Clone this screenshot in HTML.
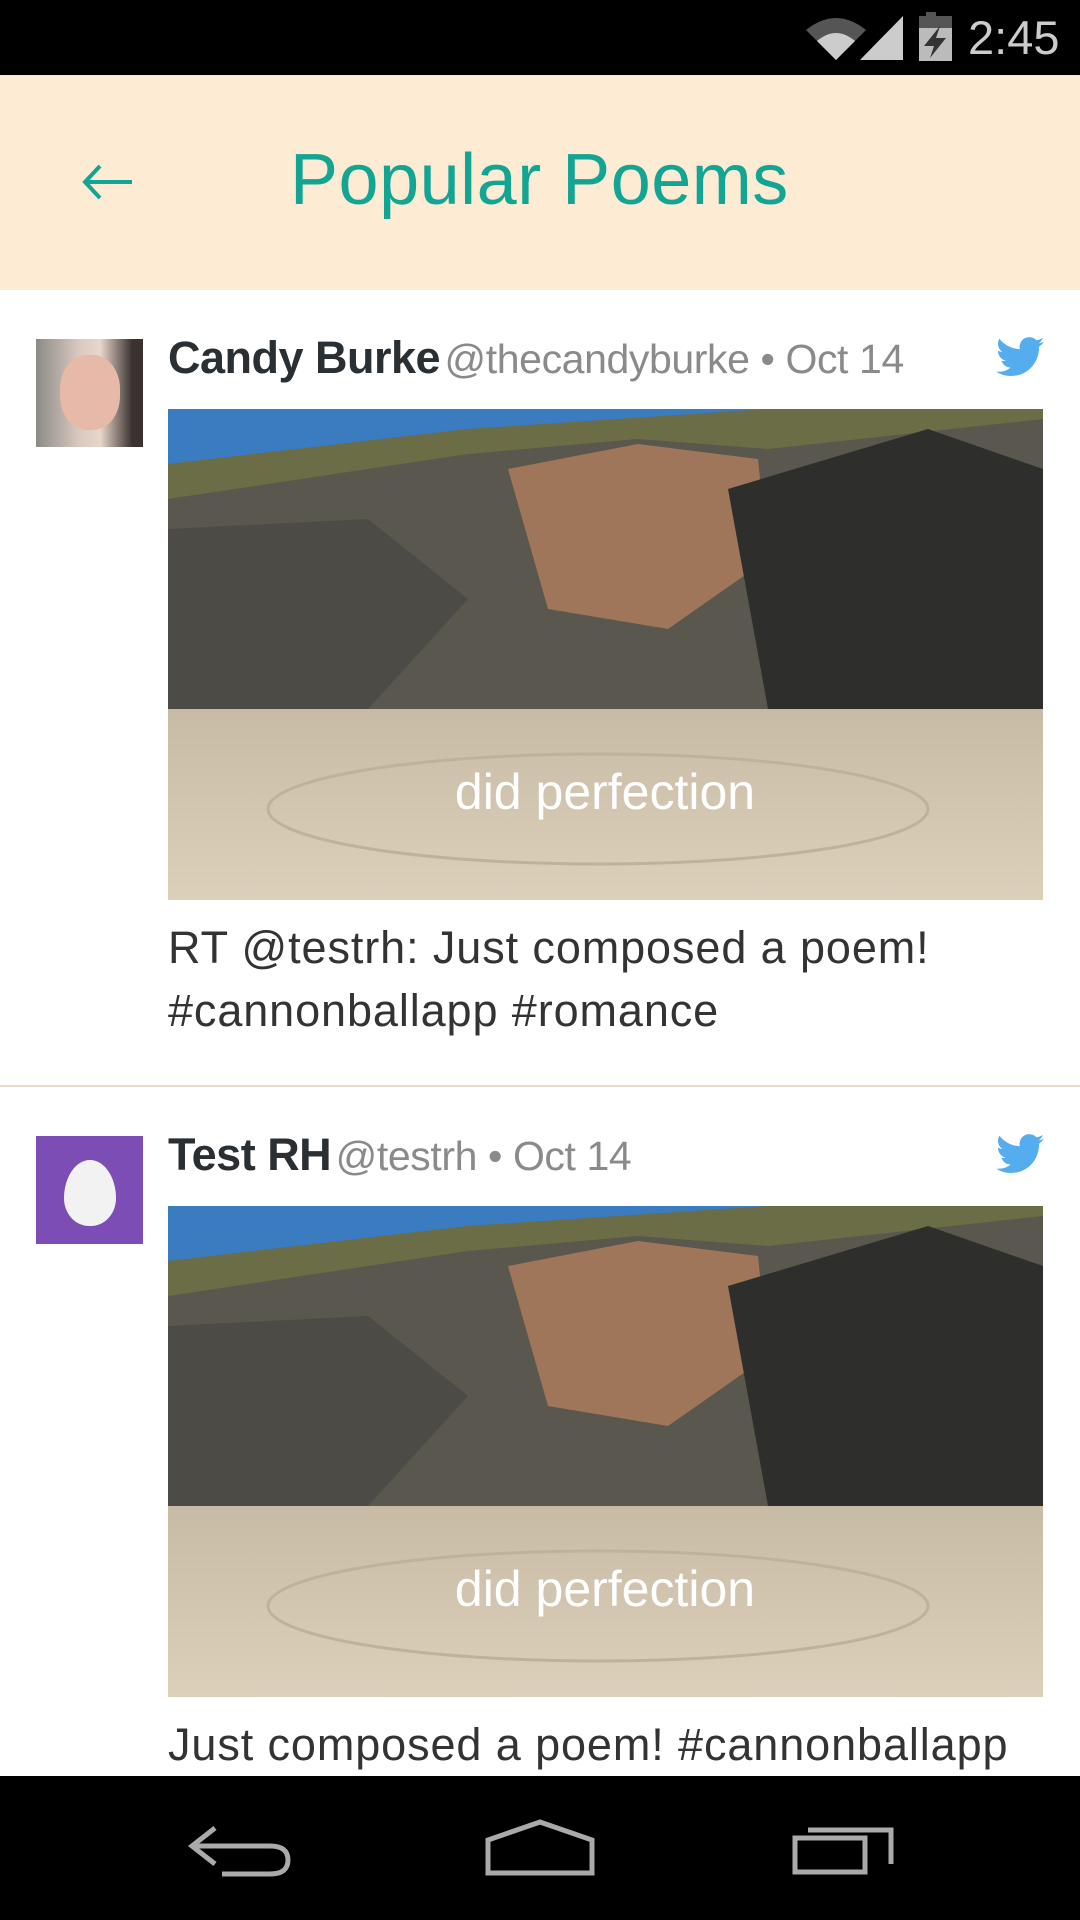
<!DOCTYPE html>
<html><head><meta charset="utf-8"><style>
*{margin:0;padding:0;box-sizing:border-box}
body{width:1080px;height:1920px;position:relative;overflow:hidden;background:#fff;font-family:"Liberation Sans",sans-serif}
.abs{position:absolute}
.name{font-weight:bold;color:#292f33;font-size:45px;letter-spacing:-0.5px}
.handle{font-size:41px;color:#8a8a8a;letter-spacing:-0.4px}
.txt{font-size:45px;color:#333;line-height:63px;letter-spacing:0.9px}
</style></head><body>
<div class="abs" style="left:0;top:0;width:1080px;height:75px;background:#000"></div>
<svg class="abs" style="left:800px;top:8px" width="160" height="60" viewBox="0 0 160 60">
<path d="M6 22 Q36 -2 66 22 L36 52 Z" fill="#555"/>
<path d="M17 33 Q36 17 55 33 L36 52 Z" fill="#ccc"/>
<path d="M60 52 L103 8 L103 52 Z" fill="#ccc"/>
<rect x="126" y="4" width="10" height="6" fill="#555"/>
<rect x="119" y="8" width="33" height="45" fill="#bbb"/>
<rect x="119" y="8" width="33" height="12" fill="#555"/>
<path d="M140 18 L124 38 L134 38 L130 50 L146 30 L136 30 Z" fill="#333"/>
</svg>
<div class="abs" style="left:968px;top:10px;font-size:47px;color:#ccc">2:45</div>
<div class="abs" style="left:0;top:75px;width:1080px;height:215px;background:#fdecd3"></div>
<svg class="abs" style="left:82px;top:162px" width="52" height="40" viewBox="0 0 52 40"><path d="M2 20 H50 M18 4 L3 20 L18 36" stroke="#12a594" stroke-width="4" fill="none"/></svg>
<div class="abs" style="left:290px;top:139px;font-size:72px;color:#12a594;letter-spacing:0.5px">Popular Poems</div>

<!-- tweet 1 -->
<div class="abs" style="left:36px;top:339px;width:107px;height:108px;background:linear-gradient(90deg,#8c8a86,#d9c9c0 40%,#e8d6cc 60%,#3a3230 90%)"></div>
<div class="abs" style="left:60px;top:355px;width:60px;height:75px;border-radius:45%;background:#e6b9a8"></div>
<div class="abs" style="left:168px;top:332px;white-space:nowrap"><span class="name">Candy Burke</span> <span class="handle">@thecandyburke • Oct 14</span></div>
<svg class="abs" style="left:996px;top:337px" width="48" height="40" viewBox="0 0 24 20"><path d="M24 2.4a10 10 0 0 1-2.8.8 4.9 4.9 0 0 0 2.2-2.7 9.8 9.8 0 0 1-3.1 1.2A4.9 4.9 0 0 0 11.900 6.1 14 14 0 0 1 1.7.9a4.9 4.9 0 0 0 1.5 6.6 4.9 4.9 0 0 1-2.2-.6 4.9 4.9 0 0 0 3.9 4.9 4.9 4.9 0 0 1-2.2.1 4.9 4.9 0 0 0 4.6 3.4A9.9 9.9 0 0 1 0 17.3 14 14 0 0 0 7.5 19.5c9.1 0 14-7.5 14-14v-.6A10 10 0 0 0 24 2.4z" fill="#55acee"/></svg>
<svg class="abs" style="left:168px;top:409px" width="875" height="491" viewBox="0 0 875 491">
<defs><linearGradient id="s" x1="0" y1="0" x2="0" y2="1"><stop offset="0" stop-color="#c8bba5"/><stop offset="1" stop-color="#ddd0bb"/></linearGradient></defs>
<rect width="875" height="491" fill="#3a4a6a"/>
<rect width="875" height="60" fill="#3b7bc0"/>
<path d="M0 55 L300 20 L600 0 L875 0 L875 60 L0 100 Z" fill="#6a6d45"/>
<path d="M0 90 L300 45 L470 30 L600 40 L875 10 L875 310 L0 310 Z" fill="#5a574e"/>
<path d="M340 60 L470 35 L590 50 L600 150 L500 220 L380 200 Z" fill="#a0765a"/>
<path d="M560 80 L760 20 L875 60 L875 300 L600 300 Z" fill="#2e2f2c"/>
<path d="M0 120 L200 110 L300 190 L200 300 L0 300 Z" fill="#4c4b45"/>
<rect y="300" width="875" height="191" fill="url(#s)"/>
<ellipse cx="430" cy="400" rx="330" ry="55" fill="none" stroke="#bfb29c" stroke-width="3"/>
<text x="437" y="400" font-family="Liberation Sans,sans-serif" font-size="50" fill="#fff" text-anchor="middle">did perfection</text>
</svg>
<div class="abs txt" style="left:168px;top:916px">RT @testrh: Just composed a poem!<br>#cannonballapp #romance</div>
<div class="abs" style="left:0;top:1085px;width:1080px;height:2px;background:#ead9c7"></div>

<!-- tweet 2 -->
<div class="abs" style="left:36px;top:1136px;width:107px;height:108px;background:#7b4db5"></div>
<div class="abs" style="left:64px;top:1160px;width:52px;height:66px;border-radius:50% 50% 48% 48%/58% 58% 42% 42%;background:#f2f2f2"></div>
<div class="abs" style="left:168px;top:1129px;white-space:nowrap"><span class="name">Test RH</span> <span class="handle">@testrh • Oct 14</span></div>
<svg class="abs" style="left:996px;top:1134px" width="48" height="40" viewBox="0 0 24 20"><path d="M24 2.4a10 10 0 0 1-2.8.8 4.9 4.9 0 0 0 2.2-2.7 9.8 9.8 0 0 1-3.1 1.2A4.9 4.9 0 0 0 11.900 6.1 14 14 0 0 1 1.7.9a4.9 4.9 0 0 0 1.5 6.6 4.9 4.9 0 0 1-2.2-.6 4.9 4.9 0 0 0 3.9 4.9 4.9 4.9 0 0 1-2.2.1 4.9 4.9 0 0 0 4.6 3.4A9.9 9.9 0 0 1 0 17.3 14 14 0 0 0 7.5 19.5c9.1 0 14-7.5 14-14v-.6A10 10 0 0 0 24 2.4z" fill="#55acee"/></svg>
<svg class="abs" style="left:168px;top:1206px" width="875" height="491" viewBox="0 0 875 491">
<defs><linearGradient id="s2" x1="0" y1="0" x2="0" y2="1"><stop offset="0" stop-color="#c8bba5"/><stop offset="1" stop-color="#ddd0bb"/></linearGradient></defs>
<rect width="875" height="491" fill="#3a4a6a"/>
<rect width="875" height="60" fill="#3b7bc0"/>
<path d="M0 55 L300 20 L600 0 L875 0 L875 60 L0 100 Z" fill="#6a6d45"/>
<path d="M0 90 L300 45 L470 30 L600 40 L875 10 L875 310 L0 310 Z" fill="#5a574e"/>
<path d="M340 60 L470 35 L590 50 L600 150 L500 220 L380 200 Z" fill="#a0765a"/>
<path d="M560 80 L760 20 L875 60 L875 300 L600 300 Z" fill="#2e2f2c"/>
<path d="M0 120 L200 110 L300 190 L200 300 L0 300 Z" fill="#4c4b45"/>
<rect y="300" width="875" height="191" fill="url(#s2)"/>
<ellipse cx="430" cy="400" rx="330" ry="55" fill="none" stroke="#bfb29c" stroke-width="3"/>
<text x="437" y="400" font-family="Liberation Sans,sans-serif" font-size="50" fill="#fff" text-anchor="middle">did perfection</text>
</svg>
<div class="abs txt" style="left:168px;top:1713px">Just composed a poem! #cannonballapp</div>

<div class="abs" style="left:0;top:1776px;width:1080px;height:144px;background:#000"></div>
<svg class="abs" style="left:0;top:1776px" width="1080" height="144" viewBox="0 0 1080 144">
<path d="M215 52 L192 70 L215 88 M194 70 H270 Q288 70 288 84 Q288 98 270 98 H222" stroke="#aaa" stroke-width="5" fill="none"/>
<path d="M488 64 L540 46 L592 64 V97 H488 Z" stroke="#aaa" stroke-width="5" fill="none"/>
<rect x="795" y="62" width="70" height="34" stroke="#aaa" stroke-width="5" fill="none"/>
<path d="M808 54 H891 V88" stroke="#aaa" stroke-width="5" fill="none"/>
</svg>
</body></html>
